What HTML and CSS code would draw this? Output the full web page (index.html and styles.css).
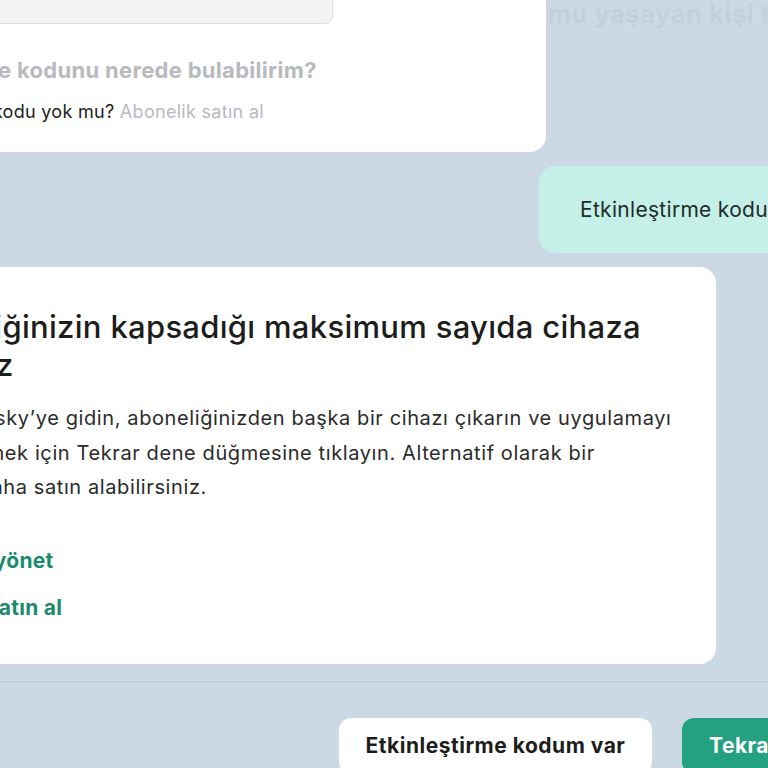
FILE: index.html
```html
<!DOCTYPE html>
<html lang="tr">
<head>
    <meta charset="UTF-8">
    <meta name="viewport" content="width=device-width, initial-scale=1.0">
    <title>Etkinleştirme</title>
    <link rel="stylesheet" href="styles.css">
</head>
<body>
    <div class="chat">
        <div class="row-top">
            <div class="card top-card">
                <div class="code-input"></div>
                <h3 class="help">Etkinleştirme kodunu nerede bulabilirim?</h3>
                <p class="note">Etkinleştirme kodu yok mu? <a href="#" class="muted-link">Abonelik satın al</a></p>
            </div>
            <span class="faded">mu yaşayan kişi tarafından</span>
        </div>

        <div class="bubble">Etkinleştirme kodum var</div>

        <div class="card main-card">
            <h2 class="title">Aboneliğinizin kapsadığı maksimum sayıda cihaza<br>ulaştınız</h2>
            <p class="text">My Kaspersky’ye gidin, aboneliğinizden başka bir cihazı çıkarın ve uygulamayı<br>etkinleştirmek için Tekrar dene düğmesine tıklayın. Alternatif olarak bir<br>abonelik daha satın alabilirsiniz.</p>
            <div class="links">
                <a href="#" class="link">Aboneliği yönet</a>
                <a href="#" class="link">Abonelik satın al</a>
            </div>
        </div>

        <div class="divider"></div>

        <div class="actions">
            <button class="btn btn-light">Etkinleştirme kodum var</button>
            <button class="btn btn-green">Tekrar dene</button>
        </div>
    </div>
</body>
</html>
```

FILE: styles.css
```css
body {
    font-family: Inter, "Noto Sans", sans-serif;
    background-color: #CDD8E5;
    margin: 0;
    padding: 0;
    height: 768px;
    overflow: hidden;
    color: #1D1D1B;
}
.chat {
    display: flex;
    flex-direction: column;
    width: 768px;
    overflow: hidden;
}
.row-top {
    display: flex;
    align-items: flex-start;
    margin-top: -40px;
}
.card {
    background-color: #fff;
    border-radius: 16px;
    box-sizing: border-box;
    flex-shrink: 0;
}
.top-card {
    width: 704px;
    margin-left: -158px;
    padding: 8px 24px 28px 24px;
}
.code-input {
    width: 467px;
    height: 56px;
    background-color: #F2F3F5;
    border: 1px solid #DADDE2;
    border-radius: 8px;
    box-sizing: border-box;
}
.help {
    margin: 32px 0 0 0;
    font-size: 22px;
    line-height: 28px;
    letter-spacing: 0.3px;
    font-weight: 700;
    color: #B7BAC0;
}
.note {
    margin: 16px 0 0 8px;
    font-size: 18px;
    line-height: 24px;
    letter-spacing: 0.3px;
    color: #1D1D1B;
}
.muted-link {
    color: #B7BAC0;
    text-decoration: none;
}
.faded {
    margin-top: 38px;
    margin-left: 2px;
    white-space: nowrap;
    font-size: 25px;
    line-height: 32px;
    letter-spacing: 0.8px;
    font-weight: 700;
    color: #C4CFDC;
}
.bubble {
    margin: 14px 0 0 539px;
    width: 440px;
    flex-shrink: 0;
    box-sizing: border-box;
    padding: 0 41px;
    height: 87px;
    line-height: 87px;
    border-radius: 16px;
    background-color: #C5F0E7;
    font-size: 21px;
    letter-spacing: 0.3px;
    color: #1E2B2A;
    white-space: nowrap;
}
.main-card {
    width: 868px;
    margin: 14px 0 0 -152px;
    padding: 41px 40px 42px 40px;
}
.title {
    margin: 0;
    font-size: 31px;
    line-height: 38px;
    letter-spacing: 0.3px;
    font-weight: 500;
    color: #1D1D1B;
}
.text {
    margin: 17px 0 0 0;
    font-size: 20px;
    line-height: 34.5px;
    letter-spacing: 0.6px;
    color: #2B2B2B;
    white-space: nowrap;
}
.links {
    display: flex;
    flex-direction: column;
    gap: 19px;
    margin-top: 42px;
}
.link {
    font-size: 21px;
    line-height: 28px;
    letter-spacing: 0.3px;
    font-weight: 700;
    color: #1A8A6C;
    text-decoration: none;
}
.divider {
    margin-top: 17px;
    height: 1px;
    background-color: #C0CBD9;
}
.actions {
    display: flex;
    gap: 30px;
    margin-top: 36px;
    padding-left: 339px;
}
.btn {
    flex-shrink: 0;
    height: 56px;
    border: none;
    border-radius: 12px;
    font-family: Inter, "Noto Sans", sans-serif;
    font-size: 21px;
    letter-spacing: 0.5px;
    font-weight: 700;
    cursor: pointer;
    white-space: nowrap;
}
.btn-light {
    width: 313px;
    background-color: #fff;
    color: #1D1D1B;
}
.btn-green {
    width: 200px;
    padding: 0 27px;
    text-align: left;
    background-color: #23A181;
    color: #fff;
}
```
